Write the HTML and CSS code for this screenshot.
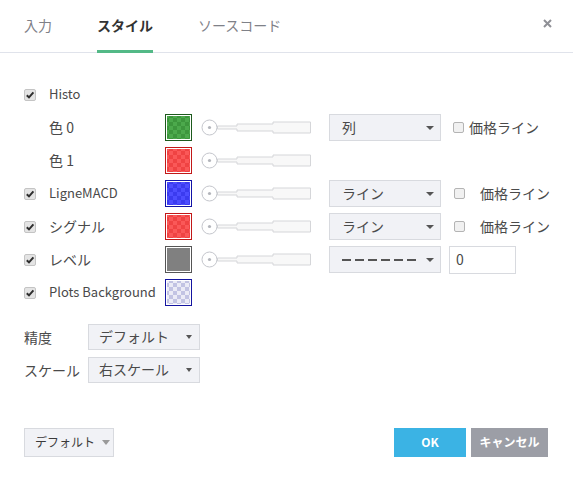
FILE: index.html
```html
<!DOCTYPE html>
<html lang="ja">
<head>
    <meta charset="UTF-8">
    <title>スタイル</title>
    <link rel="stylesheet" href="styles.css">
</head>
<body>
    <div class="dialog">
        <div class="header">
            <div class="tab">入力</div>
            <div class="tab active">スタイル</div>
            <div class="tab">ソースコード</div>
            <span class="close">
                <svg width="9" height="9" viewBox="0 0 9 9"><path d="M1 1L8 8M8 1L1 8" stroke="#8f9096" stroke-width="2"/></svg>
            </span>
        </div>

        <div class="content">
            <div class="row">
                <span class="cb on"><svg width="10" height="10" viewBox="0 0 10 10"><path d="M1.8 5.2L4 7.4L8.4 2.4" fill="none" stroke="#2e2e2e" stroke-width="2"/></svg></span>
                <span class="name en">Histo</span>
            </div>
            <div class="row">
                <span class="name">色 0</span>
                <span class="swatch green"></span>
                <span class="slider"><svg width="110" height="17" viewBox="0 0 110 17"><path d="M16.5 7H36V5H72V3H109.5V14H72V12H36V10H16.5Z" fill="#f8f8f8" stroke="#d5d6d9"/><circle cx="8.5" cy="8.5" r="7.5" fill="#fff" stroke="#c4c6cc"/><circle cx="8.5" cy="8.5" r="1.6" fill="#b3b5bb"/></svg></span>
                <div class="select"><span>列</span><i class="arrow"></i></div>
                <label class="extra"><span class="cb off"></span>価格ライン</label>
            </div>
            <div class="row">
                <span class="name">色 1</span>
                <span class="swatch red"></span>
                <span class="slider"><svg width="110" height="17" viewBox="0 0 110 17"><path d="M16.5 7H36V5H72V3H109.5V14H72V12H36V10H16.5Z" fill="#f8f8f8" stroke="#d5d6d9"/><circle cx="8.5" cy="8.5" r="7.5" fill="#fff" stroke="#c4c6cc"/><circle cx="8.5" cy="8.5" r="1.6" fill="#b3b5bb"/></svg></span>
            </div>
            <div class="row">
                <span class="cb on"><svg width="10" height="10" viewBox="0 0 10 10"><path d="M1.8 5.2L4 7.4L8.4 2.4" fill="none" stroke="#2e2e2e" stroke-width="2"/></svg></span>
                <span class="name en">LigneMACD</span>
                <span class="swatch blue"></span>
                <span class="slider"><svg width="110" height="17" viewBox="0 0 110 17"><path d="M16.5 7H36V5H72V3H109.5V14H72V12H36V10H16.5Z" fill="#f8f8f8" stroke="#d5d6d9"/><circle cx="8.5" cy="8.5" r="7.5" fill="#fff" stroke="#c4c6cc"/><circle cx="8.5" cy="8.5" r="1.6" fill="#b3b5bb"/></svg></span>
                <div class="select"><span>ライン</span><i class="arrow"></i></div>
                <label class="extra wide"><span class="cb off"></span>価格ライン</label>
            </div>
            <div class="row">
                <span class="cb on"><svg width="10" height="10" viewBox="0 0 10 10"><path d="M1.8 5.2L4 7.4L8.4 2.4" fill="none" stroke="#2e2e2e" stroke-width="2"/></svg></span>
                <span class="name">シグナル</span>
                <span class="swatch red"></span>
                <span class="slider"><svg width="110" height="17" viewBox="0 0 110 17"><path d="M16.5 7H36V5H72V3H109.5V14H72V12H36V10H16.5Z" fill="#f8f8f8" stroke="#d5d6d9"/><circle cx="8.5" cy="8.5" r="7.5" fill="#fff" stroke="#c4c6cc"/><circle cx="8.5" cy="8.5" r="1.6" fill="#b3b5bb"/></svg></span>
                <div class="select"><span>ライン</span><i class="arrow"></i></div>
                <label class="extra wide"><span class="cb off"></span>価格ライン</label>
            </div>
            <div class="row">
                <span class="cb on"><svg width="10" height="10" viewBox="0 0 10 10"><path d="M1.8 5.2L4 7.4L8.4 2.4" fill="none" stroke="#2e2e2e" stroke-width="2"/></svg></span>
                <span class="name">レベル</span>
                <span class="swatch gray"></span>
                <span class="slider"><svg width="110" height="17" viewBox="0 0 110 17"><path d="M16.5 7H36V5H72V3H109.5V14H72V12H36V10H16.5Z" fill="#f8f8f8" stroke="#d5d6d9"/><circle cx="8.5" cy="8.5" r="7.5" fill="#fff" stroke="#c4c6cc"/><circle cx="8.5" cy="8.5" r="1.6" fill="#b3b5bb"/></svg></span>
                <div class="select"><span class="dashes"></span><i class="arrow"></i></div>
                <div class="value">0</div>
            </div>
            <div class="row">
                <span class="cb on"><svg width="10" height="10" viewBox="0 0 10 10"><path d="M1.8 5.2L4 7.4L8.4 2.4" fill="none" stroke="#2e2e2e" stroke-width="2"/></svg></span>
                <span class="name en">Plots Background</span>
                <span class="swatch plots"></span>
            </div>

            <div class="opts">
                <div class="opt">
                    <span>精度</span>
                    <div class="select small"><span>デフォルト</span><i class="arrow"></i></div>
                </div>
                <div class="opt">
                    <span>スケール</span>
                    <div class="select small"><span>右スケール</span><i class="arrow"></i></div>
                </div>
            </div>
        </div>

        <div class="footer">
            <div class="btn default">デフォルト<i class="arrow grey"></i></div>
            <div class="actions">
                <div class="btn ok">OK</div>
                <div class="btn cancel">キャンセル</div>
            </div>
        </div>
    </div>
</body>
</html>
```

FILE: styles.css
```css
body {
    margin: 0;
    background-color: #fff;
    font-family: "Noto Sans CJK JP", "Open Sans", sans-serif;
    font-size: 14px;
    line-height: 20px;
    color: #4a4a4a;
}

.dialog {
    width: 573px;
    height: 478px;
}

/* tabs */
.header {
    display: flex;
    align-items: flex-start;
    height: 52px;
    padding: 0 21px 0 24px;
    border-bottom: 1px solid #e0e3eb;
}

.tab {
    height: 53px;
    box-sizing: border-box;
    display: flex;
    align-items: center;
    padding-bottom: 1px;
    margin-right: 45px;
    border-bottom: 3px solid transparent;
    color: #7f8188;
}

.tab.active {
    color: #333;
    font-weight: bold;
    border-bottom-color: #53b987;
}

.close {
    margin-left: auto;
    margin-top: 19px;
    display: flex;
}

/* rows */
.content {
    padding: 25px 0 0 24px;
}

.row {
    display: grid;
    grid-template-columns: 25px 116px 36px 128px 120px auto;
    height: 33px;
    align-items: center;
}

.row .name { grid-column: 2; padding-bottom: 2px; }
.row .name.en { font-size: 13px; }
.row .swatch { grid-column: 3; }
.row .slider { grid-column: 4; display: flex; }
.row .select { grid-column: 5; }
.row .extra, .row .value { grid-column: 6; }

.cb {
    box-sizing: border-box;
    display: inline-flex;
    align-items: center;
    justify-content: center;
    border-radius: 2px;
}

.cb.on {
    width: 12px;
    height: 12px;
    background-color: #e4e4e4;
    border: 1px solid #c4c4c4;
}

.cb.off {
    width: 11px;
    height: 11px;
    background-color: #f1f1f1;
    border: 1px solid #b4b4b4;
    margin-right: 5px;
}

.extra {
    display: flex;
    align-items: center;
    margin-left: 4px;
    padding-bottom: 2px;
}

.extra .cb.off {
    margin-top: 2px;
}

.extra.wide {
    margin-left: 5px;
}

.extra.wide .cb.off {
    margin-right: 15px;
}

.swatch {
    width: 27px;
    height: 27px;
    box-sizing: border-box;
    border: 1px solid;
    padding: 1px;
    background-clip: content-box;
}

.swatch.green {
    border-color: #1d5a1d;
    background: repeating-conic-gradient(#3d963d 0 25%, #4ca94c 0 50%) 2px 2px / 8px 8px content-box;
}

.swatch.red {
    border-color: #c21818;
    background: repeating-conic-gradient(#ef4343 0 25%, #fa5858 0 50%) 2px 2px / 8px 8px content-box;
}

.swatch.blue {
    border-color: #1212a6;
    background: repeating-conic-gradient(#3b3bef 0 25%, #4d4dff 0 50%) 2px 2px / 8px 8px content-box;
}

.swatch.gray {
    border-color: #555;
    background: #808080 content-box;
}

.swatch.plots {
    border-color: #1515a0;
    background: repeating-conic-gradient(#c2c3e3 0 25%, #ebebf6 0 50%) 2px 2px / 8px 8px content-box;
}

/* selects */
.select {
    width: 112px;
    height: 27px;
    box-sizing: border-box;
    display: flex;
    align-items: center;
    justify-content: space-between;
    padding: 0 6px 1px 12px;
    background-color: #f1f2f6;
    border: 1px solid #d8dadf;
    color: #4a4a4a;
}

.select.small {
    height: 26px;
    padding: 0 7px 1px 10px;
}

.arrow {
    width: 0;
    height: 0;
    margin-top: 1px;
    border-left: 4px solid transparent;
    border-right: 4px solid transparent;
    border-top: 4px solid #555;
}

.select.small .arrow {
    border-left-width: 3px;
    border-right-width: 3px;
}

.dashes {
    width: 74px;
    height: 2px;
    margin-top: 2px;
    background: repeating-linear-gradient(90deg, #555 0 9px, transparent 9px 13px);
}

.value {
    width: 67px;
    height: 28px;
    box-sizing: border-box;
    border: 1px solid #d8dadf;
    padding: 0 6px 1px;
    display: flex;
    align-items: center;
}

/* precision / scale */
.opts {
    margin-top: 11px;
}

.opt {
    display: grid;
    grid-template-columns: 64px 112px;
    height: 33px;
    align-items: center;
}

/* footer */
.footer {
    display: flex;
    justify-content: space-between;
    margin-top: 42px;
    padding: 0 25px 0 24px;
}

.actions {
    display: flex;
    gap: 5px;
}

.btn {
    height: 29px;
    box-sizing: border-box;
    display: flex;
    align-items: center;
    justify-content: center;
    padding-bottom: 1px;
    font-size: 12px;
}

.btn.default {
    width: 90px;
    justify-content: flex-start;
    padding-left: 10px;
    background-color: #f1f2f6;
    border: 1px solid #d8dadf;
    color: #3a3a3a;
}

.arrow.grey {
    margin-left: 7px;
    border-left-width: 4px;
    border-right-width: 4px;
    border-top: 5px solid #9a9a9a;
}

.btn.ok {
    width: 72px;
    background-color: #3bb3e4;
    color: #fff;
    font-weight: bold;
}

.btn.cancel {
    width: 77px;
    background-color: #9c9ea6;
    color: #fff;
    font-weight: bold;
}
```
